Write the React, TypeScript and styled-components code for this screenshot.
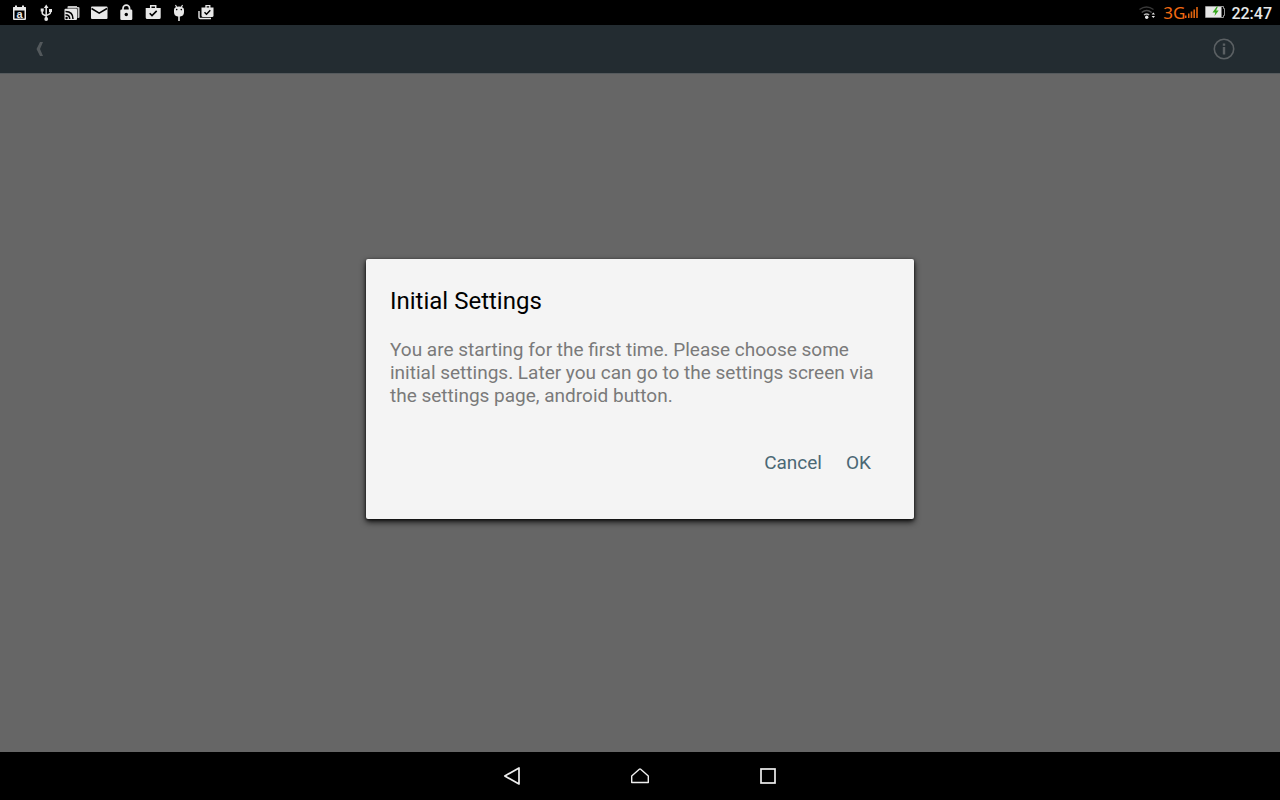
import React from "react";
import styled, { createGlobalStyle } from "styled-components";

const GlobalStyle = createGlobalStyle`
  *, *::before, *::after { box-sizing: border-box; }
  body {
    margin: 0;
    background: #000;
    font-family: Roboto, "Liberation Sans", sans-serif;
  }
`;

const Screen = styled.div`
  min-height: 100vh;
  display: flex;
  flex-direction: column;
  background: #000;
`;

const StatusBar = styled.header`
  height: 25px;
  display: flex;
  justify-content: space-between;
  padding: 0 8px 0 7px;
  color: #e8e8e8;
`;

const Notifications = styled.div`
  width: 211px;
  display: flex;
  justify-content: space-between;
`;

const StatusIcons = styled.div`
  display: flex;
  align-items: flex-start;
`;

const Network = styled.span`
  margin-left: 6px;
  color: #f26a12;
  font: 17px/25px "Noto Sans", sans-serif;
`;

const Clock = styled.time`
  margin-left: 4px;
  font-size: 16px;
  font-weight: 500;
  line-height: 27px;
`;

const Glyph = styled.svg`
  display: block;
  flex: none;
`;

const Stage = styled.div`
  flex: 1;
  display: grid;
  grid-template: 1fr / 1fr;
`;

const AppView = styled.div`
  grid-area: 1 / 1;
  background: #666;
`;

const ActionBar = styled.nav`
  height: 49px;
  display: flex;
  align-items: center;
  justify-content: space-between;
  padding: 0 40px 0 24px;
  background: #232c31;
  border-bottom: 1px solid #555a5d;
`;

const IconButton = styled.button`
  display: grid;
  place-items: center;
  width: 32px;
  height: 32px;
  padding: 0;
  border: 0;
  background: none;
  color: #5b6063;
`;

const ModalLayer = styled.div`
  grid-area: 1 / 1;
  display: grid;
  place-items: center;
  padding: 16px;
`;

const Dialog = styled.section`
  width: 100%;
  max-width: 548px;
  padding: 24px 24px 32px;
  border-radius: 2px;
  background: #f4f4f4;
  box-shadow: 0 3px 6px rgba(0, 0, 0, 0.8), 0 1px 3px rgba(0, 0, 0, 0.7);
`;

const Title = styled.h1`
  margin: 0;
  color: #000;
  font-size: 24px;
  font-weight: 400;
  line-height: 36px;
`;

const Message = styled.p`
  margin: 19px 0 0;
  color: #7a7a7a;
  font-size: 19px;
  line-height: 23px;
`;

const Actions = styled.div`
  display: flex;
  justify-content: flex-end;
  margin-top: 32px;
  padding-right: 7px;
`;

const TextButton = styled.button`
  height: 48px;
  padding: 0 12px;
  border: 0;
  background: none;
  color: #4b6875;
  font: 19px/24px Roboto, sans-serif;
`;

const NavBar = styled.nav`
  height: 48px;
  display: flex;
  justify-content: center;
  background: #000;
`;

const NavButton = styled.button`
  width: 128px;
  height: 48px;
  padding: 0;
  border: 0;
  display: grid;
  place-items: center;
  background: none;
  color: #eee;
`;

type GlyphProps = { label: string; width?: number; children: React.ReactNode };

function StatusGlyph({ label, width = 24, children }: GlyphProps) {
  return (
    <Glyph width={width} height={24} viewBox={`0 0 ${width} 24`} fill="currentColor" role="img" aria-label={label}>
      {children}
    </Glyph>
  );
}

export default function App() {
  return (
    <>
      <GlobalStyle />
      <Screen>
        <StatusBar>
          <Notifications>
            <StatusGlyph label="Calendar">
              <path fillRule="evenodd" d="M8 5.500h2v1.500h5V5.500h2v1.500h1.500q.5 0 .5.500V19q0 1-1 1H7q-1 0-1-1V7.500q0-.5.500-.5H8zM7.500 10.500v8h10v-8z" />
              <text x="12.500" y="18" textAnchor="middle" fontFamily="Liberation Sans, sans-serif" fontSize="11" fontWeight="700">a</text>
            </StatusGlyph>
            <StatusGlyph label="USB">
              <path d="M12.200 4.500l2.300 3.500h-4.600zM6.700 8.500h3v3h-3zM15 9h3v3h-3z" />
              <circle cx="12.200" cy="19" r="1.900" />
              <path d="M12.200 7v12M8.200 10v3q0 1.500 4 3M16.500 10v2.500q0 1.500-4.300 3" fill="none" stroke="currentColor" strokeWidth="1.500" />
            </StatusGlyph>
            <StatusGlyph label="Cast">
              <path d="M7.500 7q0-1 1-1H17v1h1.500q1 0 1 1v9q0 1-1 1H7.500z" opacity=".85" />
              <rect x="4" y="8" width="14" height="13" rx="1" fill="#000" opacity=".55" />
              <rect x="4.500" y="8.700" width="12.500" height="11.300" rx="1" />
              <path d="M5.500 11.500q7.500 0 7.500 7.500M5.500 14.700q4.200 0 4.200 4.300" fill="none" stroke="#000" strokeWidth="1.500" />
              <circle cx="6.600" cy="18" r="1.200" fill="#000" />
            </StatusGlyph>
            <StatusGlyph label="Mail">
              <rect x="4" y="6.500" width="16.500" height="12.500" rx="1" />
              <path d="M4.500 8.500l7.700 4.700L20 8.500" fill="none" stroke="#000" strokeWidth="1.500" />
            </StatusGlyph>
            <StatusGlyph label="Lock">
              <path d="M9 10V8.500a3.300 3.300 0 0 1 6.600 0V10" fill="none" stroke="currentColor" strokeWidth="1.700" />
              <rect x="6.300" y="9.500" width="12" height="10.500" rx="1.300" />
              <circle cx="12.300" cy="14.500" r="1.700" fill="#000" />
            </StatusGlyph>
            <StatusGlyph label="App installed">
              <path d="M9.700 8V5.700h5V8" fill="none" stroke="currentColor" strokeWidth="1.500" />
              <path d="M4.700 8h15v9.500q0 1.500-1.500 1.500h-12q-1.500 0-1.500-1.500z" />
              <path d="M8.700 13.300l2.300 2.300 4.700-4.700" fill="none" stroke="#000" strokeWidth="1.600" />
            </StatusGlyph>
            <StatusGlyph label="Debugging">
              <path d="M8.500 5l1.300 2.500M15.500 5l-1.300 2.500" stroke="currentColor" strokeWidth="1.100" />
              <path d="M7 10q0-3.500 5-3.500t5 3.500v2q0 4-3.800 4.500H10.800Q7 16 7 12z" />
              <path d="M12 16v5" stroke="currentColor" strokeWidth="1.600" />
              <circle cx="9.700" cy="9.600" r=".8" fill="#000" />
              <circle cx="14.300" cy="9.600" r=".8" fill="#000" />
            </StatusGlyph>
            <StatusGlyph label="Apps updated">
              <path d="M12 8V5.700h3.800V8" fill="none" stroke="currentColor" strokeWidth="1.300" />
              <path d="M7.500 7.500h12v8q0 1.500-1.500 1.500H9q-1.500 0-1.500-1.500z" />
              <path d="M5 11v6.200q0 1.300 1.300 1.300h10.700" fill="none" stroke="currentColor" strokeWidth="1.400" />
              <path d="M10.500 12.200l2 2 3.800-3.900" fill="none" stroke="#000" strokeWidth="1.500" />
            </StatusGlyph>
          </Notifications>

          <StatusIcons>
            <StatusGlyph label="Wi-Fi" width={20}>
              <g fill="none" strokeWidth="1.400">
                <path d="M2.500 9.500q7-5 14 0" stroke="#393939" />
                <path d="M4.700 12.500q5-4 10 0" stroke="#4c4c4c" />
                <path d="M7 15q2.600-2 5.200 0" stroke="#b5b5b5" />
              </g>
              <circle cx="9.700" cy="17.200" r="1.700" />
              <path d="M16.300 12.500l1.700 2h-3.400zM14.600 16H18l-1.700 2z" />
            </StatusGlyph>
            <Network>3G</Network>
            <StatusGlyph label="Signal strength" width={14}>
              <path d="M0 15.500h1.500V18H0zM3 13.500h1.500V18H3zM5.700 11.500h1.600V18H5.700zM8.400 9.500H10V18H8.400zM11.200 7h1.600v11h-1.600z" fill="#e0640f" />
            </StatusGlyph>
            <StatusGlyph label="Battery charging" width={28}>
              <path d="M6.500 6.500h18v2h1v7h-1v2h-18z" fill="#000" stroke="#999" strokeWidth="1" />
              <rect x="7" y="7" width="15.500" height="10" />
              <path d="M17.800 6.500L13.500 12.500h2.800l-.8 3.500 4.200-5.500h-2.600l1.800-4z" fill="#35a81c" />
            </StatusGlyph>
            <Clock>22:47</Clock>
          </StatusIcons>
        </StatusBar>

        <Stage>
          <AppView>
            <ActionBar>
              <IconButton aria-label="Back">
                <Glyph width="8" height="16" viewBox="0 0 8 16" fill="currentColor">
                  <path d="M4 1h3L4 8l3 7H4L.5 8z" opacity=".85" />
                </Glyph>
              </IconButton>
              <IconButton aria-label="Information">
                <Glyph width="24" height="24" viewBox="0 0 24 24" fill="currentColor">
                  <circle cx="12" cy="12" r="9.700" fill="none" stroke="currentColor" strokeWidth="1.600" />
                  <path d="M10.800 6.500h2.400v2.200h-2.400zM10.800 10h2.400v7.500h-2.400z" />
                </Glyph>
              </IconButton>
            </ActionBar>
          </AppView>
          <ModalLayer>
            <Dialog role="dialog" aria-modal="true" aria-labelledby="dialog-title">
              <Title id="dialog-title">Initial Settings</Title>
              <Message>
                You are starting for the first time. Please choose some initial settings. Later you can go to the
                settings screen via the settings page, android button.
              </Message>
              <Actions>
                <TextButton>Cancel</TextButton>
                <TextButton>OK</TextButton>
              </Actions>
            </Dialog>
          </ModalLayer>
        </Stage>

        <NavBar>
          <NavButton aria-label="Back">
            <Glyph width="24" height="24" viewBox="0 0 24 24" fill="none" stroke="currentColor" strokeWidth="1.700" strokeLinejoin="round">
              <path d="M4.800 12l14.200-8v16z" />
            </Glyph>
          </NavButton>
          <NavButton aria-label="Home">
            <Glyph width="24" height="24" viewBox="0 0 24 24" fill="none" stroke="currentColor" strokeWidth="1.400" strokeLinejoin="round">
              <path d="M11.300 5.300q.7-.6 1.400 0L20.300 12v6.500H3.700V12z" />
            </Glyph>
          </NavButton>
          <NavButton aria-label="Recent apps">
            <Glyph width="24" height="24" viewBox="0 0 24 24" fill="none" stroke="currentColor" strokeWidth="1.700">
              <rect x="5" y="5" width="14" height="14" />
            </Glyph>
          </NavButton>
        </NavBar>
      </Screen>
    </>
  );
}
